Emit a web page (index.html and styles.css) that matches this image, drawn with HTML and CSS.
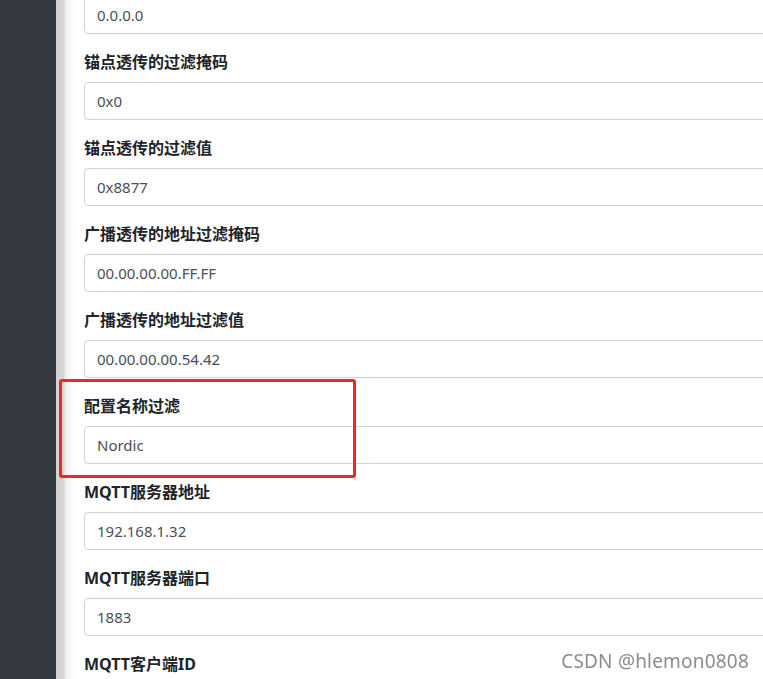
FILE: index.html
```html
<!DOCTYPE html>
<html lang="zh-CN">
<head>
    <meta charset="UTF-8">
    <meta name="viewport" content="width=device-width, initial-scale=1.0">
    <title>网关配置</title>
    <link rel="stylesheet" href="styles.css">
</head>
<body>

    <!-- Sidebar -->
    <aside class="sidebar"></aside>

    <!-- Settings form -->
    <main class="content">
        <form class="settings">
            <div class="form-group">
                <input class="form-control" type="text" value="0.0.0.0">
            </div>
            <div class="form-group">
                <label>锚点透传的过滤掩码</label>
                <input class="form-control" type="text" value="0x0">
            </div>
            <div class="form-group">
                <label>锚点透传的过滤值</label>
                <input class="form-control" type="text" value="0x8877">
            </div>
            <div class="form-group">
                <label>广播透传的地址过滤掩码</label>
                <input class="form-control" type="text" value="00.00.00.00.FF.FF">
            </div>
            <div class="form-group">
                <label>广播透传的地址过滤值</label>
                <input class="form-control" type="text" value="00.00.00.00.54.42">
            </div>
            <div class="form-group highlighted">
                <label>配置名称过滤</label>
                <input class="form-control" type="text" value="Nordic">
                <div class="mark-box"></div>
            </div>
            <div class="form-group">
                <label>MQTT服务器地址</label>
                <input class="form-control" type="text" value="192.168.1.32">
            </div>
            <div class="form-group">
                <label>MQTT服务器端口</label>
                <input class="form-control" type="text" value="1883">
            </div>
            <div class="form-group">
                <label>MQTT客户端ID</label>
                <input class="form-control" type="text" value="">
            </div>
        </form>
    </main>

    <div class="watermark">CSDN @hlemon0808</div>

</body>
</html>
```

FILE: styles.css
```css
/* General */
html, body {
    height: 100%;
}

body {
    margin: 0;
    display: flex;
    overflow: hidden;
    background-color: #fff;
    color: #212529;
    font-family: "Noto Sans", "Noto Sans CJK SC", sans-serif;
    font-size: 16px;
    line-height: 1.5;
}

/* Sidebar */
.sidebar {
    width: 56px;
    flex-shrink: 0;
    background-color: #343a40;
}

/* Content with the soft shadow on its left edge */
.content {
    flex: 1;
    min-width: 0;
    padding-left: 28px;
    background: linear-gradient(to right, #d3d3d3 0, #d6d6d6 8px, #eeeeee 9px, #fafafa 15px, #fff 22px);
}

.settings {
    margin-top: -4px;
    width: 760px;
}

/* Form groups */
.form-group {
    margin-bottom: 16px;
    position: relative;
}

.form-group label {
    display: block;
    margin-bottom: 8px;
    font-weight: 700;
    color: #212529;
}

.form-control {
    display: block;
    box-sizing: border-box;
    width: 100%;
    height: 38px;
    padding: 6px 12px;
    border: 1px solid #ced4da;
    border-radius: 4px;
    background-color: #fff;
    color: #495057;
    font-family: "Noto Sans", "Noto Sans CJK SC", sans-serif;
    font-size: 15px;
    line-height: 1.5;
}

/* Red annotation box */
.mark-box {
    position: absolute;
    top: -15px;
    left: -25px;
    width: 297px;
    height: 99px;
    box-sizing: border-box;
    border: 3px solid #f52525;
    border-radius: 3px;
    pointer-events: none;
}

/* Watermark */
.watermark {
    position: fixed;
    right: 14px;
    bottom: 4px;
    color: #8c8c8c;
    font-family: "Noto Sans", sans-serif;
    font-size: 19px;
    letter-spacing: 0.2px;
}
```
